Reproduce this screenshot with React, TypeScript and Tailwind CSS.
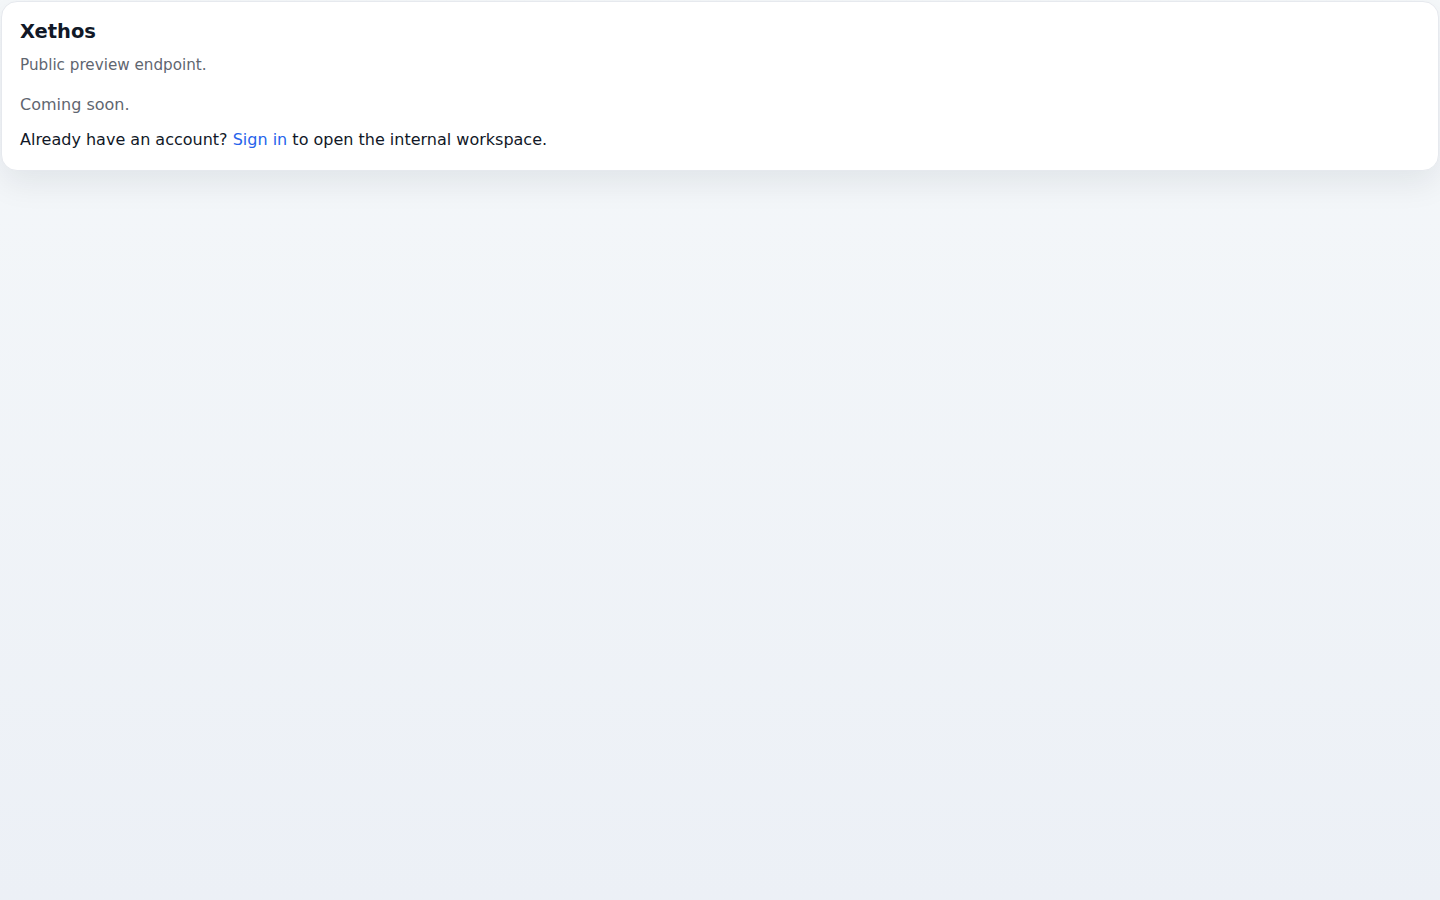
export default function App() {
  return (
    <div className="min-h-screen bg-gradient-to-b from-[#f5f8fa] to-[#ecf0f6] p-px font-['DejaVu_Sans',sans-serif]">
      <main className="rounded-2xl border border-[#e6e9ee] bg-white px-[18px] pb-[18px] pt-[18px] shadow-[0_12px_32px_rgba(15,23,42,0.08)]">
        <h1 className="text-[19.5px] font-bold leading-6 text-[#111827]">Xethos</h1>
        <p className="mt-[10px] text-[15.2px] leading-[22px] text-[#5f6670]">Public preview endpoint.</p>
        <p className="mt-[17px] text-base leading-6 text-[#5f6670]">Coming soon.</p>
        <p className="mt-[11px] text-base leading-6 text-[#111827]">
          Already have an account?{" "}
          <a href="#" className="text-[#2563eb]">
            Sign in
          </a>{" "}
          to open the internal workspace.
        </p>
      </main>
    </div>
  );
}
